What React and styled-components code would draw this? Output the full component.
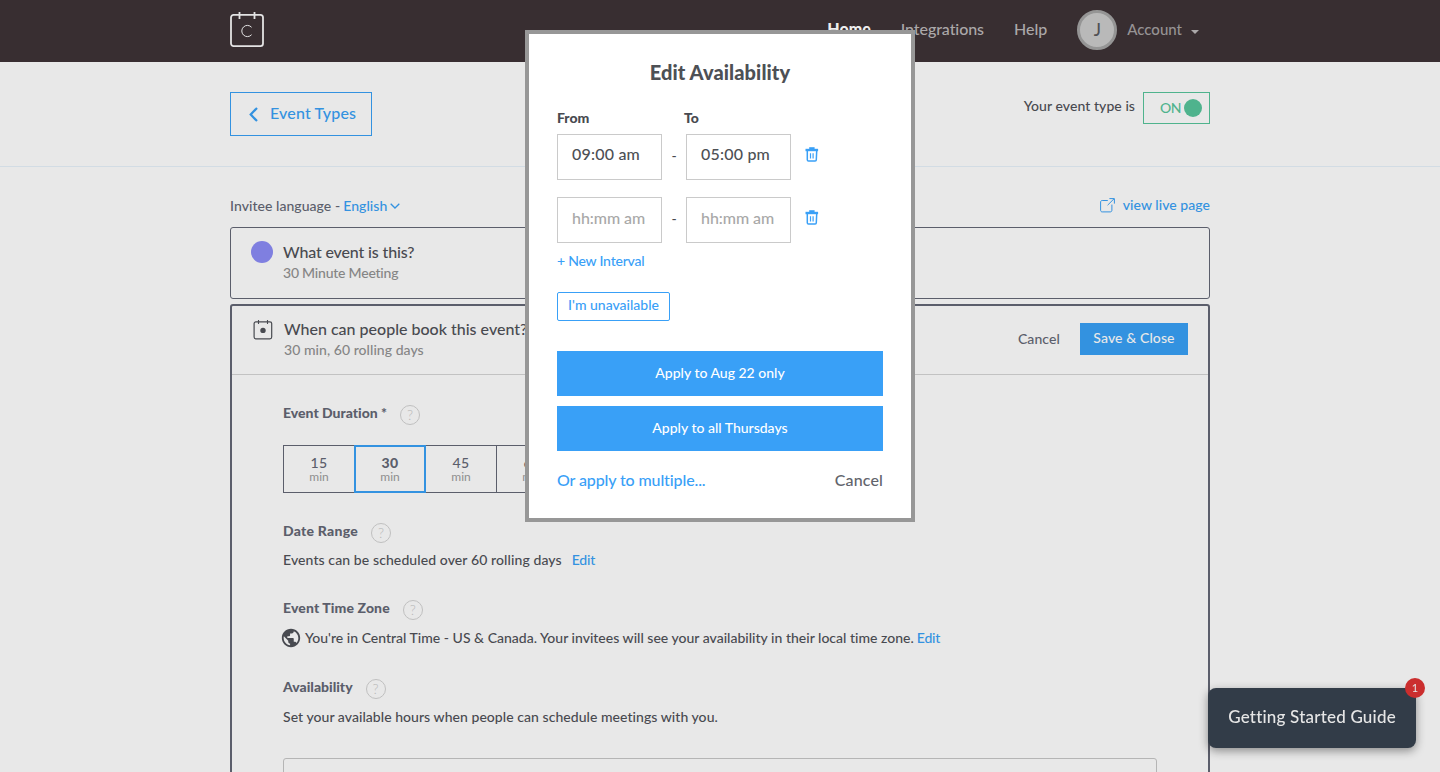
import React from 'react';
import styled, { createGlobalStyle } from 'styled-components';

const color = {
  page: '#e8e8e8',
  ink: '#484a50',
  slate: '#5b5e6b',
  muted: '#858585',
  blue: '#3392e0',
  bright: '#39a0f7',
  green: '#4fb38d',
};

const GlobalStyle = createGlobalStyle`
  *, *::before, *::after { box-sizing: border-box; }
  html, body { margin: 0; height: 100%; overflow: hidden; }
  body {
    background: ${color.page};
    color: ${color.ink};
    font-family: Lato, "Liberation Sans", sans-serif;
    font-size: 14px;
    font-variant-ligatures: none;
    line-height: 20px;
  }
  svg { display: block; flex: none; }
  button { font: inherit; color: inherit; background: none; border: 0; padding: 0; letter-spacing: inherit; }
`;

const Page = styled.div`
  height: 772px;
  overflow: hidden;
`;

const Container = styled.div`
  width: 980px;
  margin: 0 auto;
  display: flex;
  justify-content: space-between;
  align-items: ${(p) => p.$align || 'center'};
`;

const Label = styled.span`
  white-space: nowrap;
  flex: none;
  font-size: ${(p) => p.$size || 14}px;
  font-weight: ${(p) => p.$weight || 500};
  color: ${(p) => p.$color || 'inherit'};
  letter-spacing: ${(p) => p.$track || 0}px;
`;

const TopBar = styled.header`
  height: 62px;
  background: #382e31;
`;

const TopBarInner = styled(Container)`
  height: 60px;
`;

const Nav = styled.nav`
  display: flex;
  align-items: center;
  gap: 30px;
  color: #aba8a9;
  line-height: 18px;

  > span { padding-bottom: 2px; }
`;

const AccountMenu = styled.div`
  display: flex;
  align-items: center;
  padding-right: 11px;

  > span { padding-bottom: 2px; }
`;

const Avatar = styled.div`
  width: 40px;
  height: 40px;
  margin-right: 10px;
  border: 3px solid #959595;
  border-radius: 50%;
  background: #b9b9b9;
  color: #505055;
  font-size: 17px;
  font-weight: 500;
  display: flex;
  align-items: center;
  justify-content: center;
`;

const Caret = styled.i`
  margin: 3px 0 0 9px;
  border: 4px solid transparent;
  border-top-color: #aba8a9;
  border-bottom: 0;
`;

const SubBar = styled.section`
  height: 105px;
  padding-top: 30px;
  border-bottom: 1px solid #d2dce4;
`;

const BackButton = styled.button`
  width: 142px;
  height: 44px;
  padding-left: 18px;
  display: flex;
  align-items: center;
  gap: 12px;
  border: 1px solid ${color.blue};
  color: ${color.blue};

  > span { padding-bottom: 2px; }
`;

const Status = styled.div`
  display: flex;
  gap: 8px;
  line-height: 28px;
`;

const Toggle = styled.div`
  width: 67px;
  height: 32px;
  padding-right: 7px;
  display: flex;
  align-items: center;
  justify-content: flex-end;
  gap: 3px;
  border: 1px solid ${color.green};
  color: ${color.green};

  > span { padding-bottom: 1px; }
`;

const Knob = styled.i`
  width: 18px;
  height: 18px;
  border-radius: 50%;
  background: ${color.green};
`;

const LanguageRow = styled(Container)`
  height: 60px;
  padding-top: 18px;
`;

const Inline = styled.div`
  display: flex;
  align-items: center;
  gap: ${(p) => p.$gap || 0}px;
  padding-bottom: ${(p) => p.$bottom || 0}px;
  color: ${(p) => p.$color || 'inherit'};
`;

const Card = styled.section`
  width: 980px;
  height: ${(p) => p.$height}px;
  margin: 0 auto 5px;
  border: ${(p) => p.$border}px solid ${color.slate};
  border-radius: 3px;
`;

const CardHead = styled.header`
  height: ${(p) => p.$height}px;
  padding: ${(p) => p.$pad};
  display: flex;
  align-items: flex-start;
  border-bottom: ${(p) => (p.$line ? '1px solid #c2c2c2' : '0')};
`;

const EventDot = styled.i`
  width: 22px;
  height: 22px;
  margin-right: 10px;
  border-radius: 50%;
  background: #7f7fe0;
`;

const Titles = styled.div`
  display: flex;
  flex-direction: column;
  flex: 1;
  line-height: 21px;
  margin-top: ${(p) => p.$top || 0}px;
  margin-left: ${(p) => p.$left || 0}px;
`;

const HeadActions = styled.div`
  display: flex;
  align-items: center;
  gap: 20px;
  padding-top: 3px;
  color: ${color.slate};

  > span { padding-bottom: 1px; }
`;

const SaveButton = styled.button`
  width: 108px;
  height: 32px;
  padding-bottom: 2px;
  background: ${color.blue};
  color: #e8e8e8;
`;

const CardBody = styled.div`
  padding: 30px 51px 0;
`;

const FieldHead = styled.div`
  height: 20px;
  display: flex;
  align-items: flex-start;
  gap: 13px;
  color: ${color.slate};
`;

const FieldLabel = styled(Label)`
  line-height: 16px;
`;

const Help = styled.span`
  width: 20px;
  height: 20px;
  border: 1px solid #c0c0c0;
  border-radius: 50%;
  color: #b8b8b8;
  font-size: 14px;
  font-weight: 300;
  line-height: 18px;
  text-align: center;
`;

const Durations = styled.div`
  display: flex;
  height: 48px;
  margin: 20px 0 30px;
`;

const Duration = styled.button`
  width: 72px;
  margin-right: -1px;
  padding-top: 2px;
  position: relative;
  z-index: ${(p) => (p.$on ? 1 : 0)};
  border: ${(p) => (p.$on ? `2px solid ${color.blue}` : `1px solid ${color.slate}`)};
  display: flex;
  flex-direction: column;
  align-items: center;
  justify-content: center;
  line-height: 14px;
  color: ${color.slate};
`;

const FieldText = styled.div`
  display: flex;
  align-items: center;
  height: 20px;
  gap: ${(p) => p.$gap || 0}px;
  margin: ${(p) => p.$margin};
`;

const HoursBox = styled.div`
  height: 60px;
  border: 1px solid #b5b5b5;
  border-radius: 3px;
`;

const Modal = styled.div`
  position: fixed;
  z-index: 5;
  top: 30px;
  left: 525px;
  width: 390px;
  height: 492px;
  padding: 0 28px;
  border: 4px solid #979797;
  background: #fff;
`;

const ModalTitle = styled.h2`
  margin: 25px 0 27px;
  font-size: 20px;
  font-weight: 900;
  line-height: 26px;
  letter-spacing: ${(p) => p.$track}px;
  text-align: center;
  color: #4d5055;
`;

const IntervalGrid = styled.div`
  display: grid;
  grid-template-columns: 105px 24px 105px 42px;
  align-items: center;
  text-align: center;
`;

const Column = styled(Label)`
  text-align: left;
  height: 22px;
  line-height: 12px;
  margin-left: ${(p) => p.$shift || 0}px;
`;

const TimeField = styled.div`
  height: 46px;
  margin-bottom: ${(p) => (p.$empty ? 0 : 17)}px;
  padding: 0 0 ${(p) => (p.$empty ? 4 : 6)}px 14px;
  border: 1px solid #cacaca;
  display: flex;
  align-items: center;
  color: ${(p) => (p.$empty ? '#a8a8a8' : '#4d5055')};
`;

const Cell = styled.div`
  display: flex;
  justify-content: center;
  padding-bottom: ${(p) => p.$bottom}px;
`;

const NewInterval = styled.div`
  margin-top: 8px;
  color: ${color.bright};
`;

const UnavailableButton = styled.button`
  display: block;
  width: 113px;
  height: 29px;
  margin: 21px 0 30px;
  padding-bottom: 4px;
  border: 1px solid ${color.bright};
  border-radius: 2px;
  color: ${color.bright};
`;

const ApplyButton = styled.button`
  display: block;
  width: 326px;
  height: 45px;
  margin-bottom: 10px;
  padding-bottom: 1px;
  background: ${color.bright};
  color: #fff;
`;

const ModalFooter = styled.footer`
  display: flex;
  justify-content: space-between;
  padding-top: 9px;
`;

const Guide = styled.aside`
  position: fixed;
  z-index: 6;
  left: 1208px;
  top: 688px;
  width: 208px;
  height: 60px;
  padding-bottom: 2px;
  border-radius: 8px;
  background: #323c48;
  color: #e6e6e6;
  box-shadow: 0 3px 10px rgba(0, 0, 0, 0.4);
  display: flex;
  align-items: center;
  justify-content: center;
`;

const GuideBadge = styled.span`
  position: absolute;
  top: -10px;
  right: -9px;
  width: 20px;
  height: 20px;
  border-radius: 50%;
  background: #cb2e2e;
  font-size: 11px;
  line-height: 19px;
  text-align: center;
`;

const Logo = () => (
  <svg width="34" height="36" viewBox="0 0 34 36" fill="none" stroke="#e3e3e3">
    <rect x="1" y="2.8" width="32" height="31.4" rx="2.6" strokeWidth="1.8" />
    <path d="M9.5 0v7M24.5 0v7" strokeWidth="1.8" />
    <path d="M21.6 15.3a5.6 5.6 0 1 0 0 7.4" strokeWidth="1" />
  </svg>
);

const ChevronLeft = () => (
  <svg width="9" height="15" viewBox="0 0 9 15" fill="none" stroke="currentColor" strokeWidth="2.2">
    <path d="M8 .9 1.7 7.5 8 14.1" />
  </svg>
);

const ChevronDown = () => (
  <svg width="10" height="6" viewBox="0 0 10 6" fill="none" stroke="currentColor" strokeWidth="1.3">
    <path d="M.7.7 5 5 9.3.7" />
  </svg>
);

const ExternalIcon = () => (
  <svg width="15" height="15" viewBox="0 0 15 15" fill="none" stroke="currentColor">
    <path d="M7.8 2.5H2.2C1.2 2.5.6 3.1.6 4v8.2c0 1 .6 1.7 1.6 1.7h8.1c1 0 1.6-.7 1.6-1.7V6.6" />
    <path d="M7.6 7.2 14 .8M9.4.6h5v5" />
  </svg>
);

const CalendarIcon = () => (
  <svg width="20" height="20" viewBox="0 0 20 20" fill="none" stroke={color.ink}>
    <rect x="1.1" y="1.8" width="17.6" height="17" rx="1.8" strokeWidth="1.2" />
    <path d="M5.5 0v4M14.5 0v4" strokeWidth="1.1" />
    <circle cx="10" cy="10.4" r="2.7" fill={color.ink} stroke="none" />
  </svg>
);

const GlobeIcon = () => (
  <svg width="22" height="22" viewBox="0 0 24 24" fill={color.ink}>
    <path d="M12 2C6.48 2 2 6.48 2 12s4.48 10 10 10 10-4.48 10-10S17.52 2 12 2zm-1 17.93c-3.95-.49-7-3.85-7-7.93 0-.62.08-1.21.21-1.79L9 15v1c0 1.1.9 2 2 2v1.93zm6.9-2.54c-.26-.81-1-1.39-1.9-1.39h-1v-3c0-.55-.45-1-1-1H8v-2h2c.55 0 1-.45 1-1V7h2c1.1 0 2-.9 2-2v-.41c2.93 1.19 5 4.06 5 7.41 0 2.08-.8 3.97-2.1 5.39z" />
  </svg>
);

const TrashIcon = () => (
  <svg width="14" height="15" viewBox="0 0 14 15" fill="none" stroke={color.bright}>
    <path d="M4.2 1.2h5.4" strokeWidth="2" />
    <path d="M.5 3h12.6" strokeWidth="2.4" />
    <path d="M2.3 4v8.8c0 .9.4 1.3 1.2 1.3h6.6c.8 0 1.2-.5 1.2-1.3l.4-8.8" strokeWidth="1.5" />
    <path d="M5.5 6.3v5.2M8.1 6.3v5.2" strokeWidth="1.2" />
  </svg>
);

const durations = [
  { value: '15' },
  { value: '30', on: true },
  { value: '45' },
  { value: '60' },
];

const intervals = [
  { from: '09:00 am', to: '05:00 pm', track: 0.2 },
  { from: 'hh:mm am', to: 'hh:mm am', track: -0.05, empty: true },
];

export default function App() {
  return (
    <Page>
      <GlobalStyle />
      <TopBar>
        <TopBarInner>
          <Logo />
          <Nav>
            <Label $size={16} $weight={900} $color="#eee">Home</Label>
            <Label $size={16} $track={-0.08}>Integrations</Label>
            <Label $size={16}>Help</Label>
            <AccountMenu>
              <Avatar>J</Avatar>
              <Label $size={15} $color="#969394">Account</Label>
              <Caret />
            </AccountMenu>
          </Nav>
        </TopBarInner>
      </TopBar>

      <SubBar>
        <Container $align="flex-start">
          <BackButton>
            <ChevronLeft />
            <Label $size={16} $track={0.16}>Event Types</Label>
          </BackButton>
          <Status>
            <Label $track={0.06}>Your event type is</Label>
            <Toggle>
              <Label $track={-0.5}>ON</Label>
              <Knob />
            </Toggle>
          </Status>
        </Container>
      </SubBar>

      <LanguageRow>
        <Inline $gap={3}>
          <Label $color={color.slate} $track={0.05}>Invitee language -</Label>
          <Inline $gap={3} $color={color.blue}>
            <Label $track={0.08}>English</Label>
            <ChevronDown />
          </Inline>
        </Inline>
        <Inline $gap={8} $bottom={2} $color={color.blue}>
          <ExternalIcon />
          <Label $track={0.05}>view live page</Label>
        </Inline>
      </LanguageRow>

      <Card $height={72} $border={1}>
        <CardHead $height={70} $pad="13px 20px 0">
          <EventDot />
          <Titles>
            <Label $size={16} $track={-0.15}>What event is this?</Label>
            <Label $color={color.muted} $track={-0.22}>30 Minute Meeting</Label>
          </Titles>
        </CardHead>
      </Card>

      <Card $height={560} $border={2}>
        <CardHead $height={69} $pad="14px 20px 0 21px" $line>
          <CalendarIcon />
          <Titles $top={-2} $left={11}>
            <Label $size={16}>When can people book this event?</Label>
            <Label $color={color.muted} $track={0.05}>30 min, 60 rolling days</Label>
          </Titles>
          <HeadActions>
            <Label $track={0.1}>Cancel</Label>
            <SaveButton><Label $track={0.1}>Save &amp; Close</Label></SaveButton>
          </HeadActions>
        </CardHead>
        <CardBody>
          <FieldHead>
            <FieldLabel $weight={900}>Event Duration *</FieldLabel>
            <Help>?</Help>
          </FieldHead>
          <Durations>
            {durations.map((d) => (
              <Duration key={d.value} $on={d.on}>
                <Label $weight={d.on ? 900 : 500} $track={0.4}>{d.value}</Label>
                <Label $size={12} $weight={400} $color="#8e8e8e">min</Label>
              </Duration>
            ))}
          </Durations>
          <FieldHead>
            <FieldLabel $weight={900} $track={0.25}>Date Range</FieldLabel>
            <Help>?</Help>
          </FieldHead>
          <FieldText $margin="7px 0 30px" $gap={10}>
            <Label $track={0.1}>Events can be scheduled over 60 rolling days</Label>
            <Label $color={color.blue} $track={-0.2}>Edit</Label>
          </FieldText>
          <FieldHead>
            <FieldLabel $weight={900} $track={0.12}>Event Time Zone</FieldLabel>
            <Help>?</Help>
          </FieldHead>
          <FieldText $margin="8px 0 31px -3px" $gap={3}>
            <GlobeIcon />
            <Label $track={0.01}>You're in Central Time - US &amp; Canada. Your invitees will see your availability in their local time zone.</Label>
            <Label $color={color.blue} $track={-0.2}>Edit</Label>
          </FieldText>
          <FieldHead>
            <FieldLabel $weight={900}>Availability</FieldLabel>
            <Help>?</Help>
          </FieldHead>
          <FieldText $margin="8px 0 31px">
            <Label $track={0.05}>Set your available hours when people can schedule meetings with you.</Label>
          </FieldText>
          <HoursBox />
        </CardBody>
      </Card>

      <Modal>
        <ModalTitle $track={0.1}>Edit Availability</ModalTitle>
        <IntervalGrid>
          <Column $weight={900}>From</Column>
          <span />
          <Column $weight={900} $shift={-2}>To</Column>
          <span />
          {intervals.map((row, i) => (
            <React.Fragment key={i}>
              <TimeField $empty={row.empty}>
                <Label $size={16} $track={row.track}>{row.from}</Label>
              </TimeField>
              <Cell $bottom={i ? 2 : 20}><Label>-</Label></Cell>
              <TimeField $empty={row.empty}>
                <Label $size={16} $track={row.track}>{row.to}</Label>
              </TimeField>
              <Cell $bottom={i ? 5 : 23}><TrashIcon /></Cell>
            </React.Fragment>
          ))}
        </IntervalGrid>
        <NewInterval><Label $track={-0.22}>+ New Interval</Label></NewInterval>
        <UnavailableButton><Label>I'm unavailable</Label></UnavailableButton>
        <ApplyButton><Label>Apply to Aug 22 only</Label></ApplyButton>
        <ApplyButton><Label>Apply to all Thursdays</Label></ApplyButton>
        <ModalFooter>
          <Label $size={16} $color={color.bright} $track={-0.12}>Or apply to multiple...</Label>
          <Label $size={16} $color="#62646c" $track={0.15}>Cancel</Label>
        </ModalFooter>
      </Modal>

      <Guide>
        <Label $size={17} $track={0.2}>Getting Started Guide</Label>
        <GuideBadge>1</GuideBadge>
      </Guide>
    </Page>
  );
}
